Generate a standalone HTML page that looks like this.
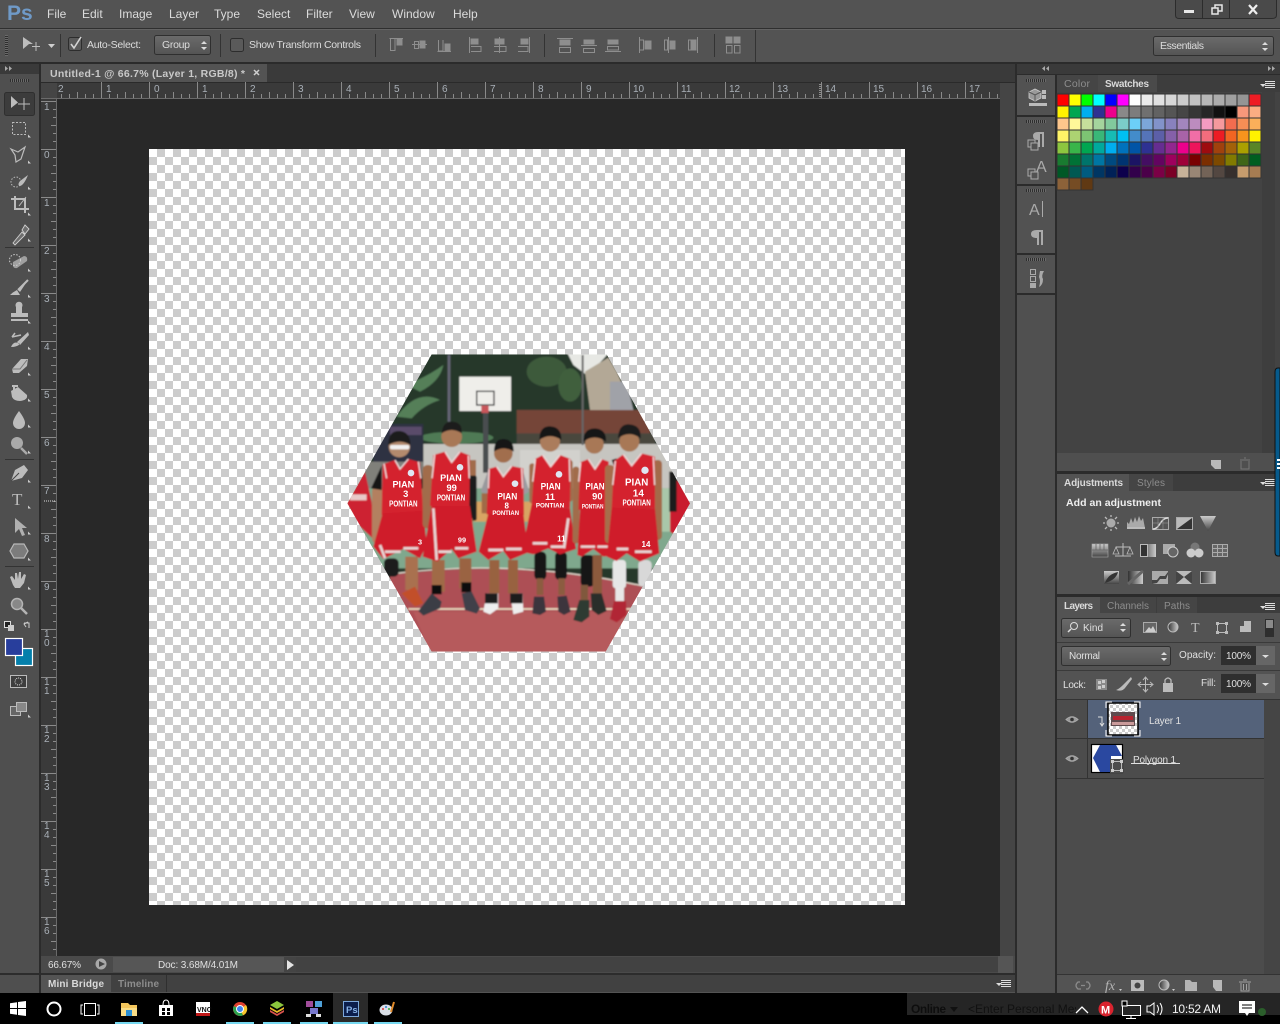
<!DOCTYPE html>
<html><head><meta charset="utf-8"><title>Photoshop</title>
<style>
html,body{margin:0;padding:0;background:#535353;overflow:hidden;width:1280px;height:1024px}
svg{display:block;position:absolute;left:0;top:0}
text{font-family:"Liberation Sans",sans-serif;font-size:11px;fill:#d6d6d6}
.m{font-size:12px;fill:#dcdcdc}
.o{font-size:10.5px;fill:#dcdcdc}
.r{font-size:10px;fill:#a9b0b8}
.t{font-size:10px;font-weight:bold;fill:#8d8d8d}
.a{font-size:10px;font-weight:bold;fill:#dadada}
.c{font-size:10px;fill:#e0e0e0}
.i{fill:#bcbcbc}
.n{font-weight:bold;fill:#fff;text-anchor:middle}
</style></head><body>
<svg width="1280" height="1024" viewBox="0 0 1280 1024">
<defs>
<pattern id="ck" width="16" height="16" patternUnits="userSpaceOnUse" x="149" y="149"><rect width="16" height="16" fill="#fff"/><rect x="8" width="8" height="8" fill="#ccc"/><rect y="8" width="8" height="8" fill="#ccc"/></pattern>
<pattern id="ck2" width="6" height="6" patternUnits="userSpaceOnUse"><rect width="6" height="6" fill="#fff"/><rect x="3" width="3" height="3" fill="#ccc"/><rect y="3" width="3" height="3" fill="#ccc"/></pattern>
<pattern id="rx" width="48" height="16" patternUnits="userSpaceOnUse" x="149" y="82"><rect width="1" height="16" fill="#8a8a8a"/><rect x="8" y="12" width="1" height="4" fill="#8a8a8a"/><rect x="16" y="12" width="1" height="4" fill="#8a8a8a"/><rect x="24" y="10" width="1" height="6" fill="#8a8a8a"/><rect x="32" y="12" width="1" height="4" fill="#8a8a8a"/><rect x="40" y="12" width="1" height="4" fill="#8a8a8a"/></pattern>
<pattern id="ry" width="16" height="48" patternUnits="userSpaceOnUse" x="41" y="149"><rect width="16" height="1" fill="#8a8a8a"/><rect x="12" y="8" height="1" width="4" fill="#8a8a8a"/><rect x="12" y="16" height="1" width="4" fill="#8a8a8a"/><rect x="10" y="24" height="1" width="6" fill="#8a8a8a"/><rect x="12" y="32" height="1" width="4" fill="#8a8a8a"/><rect x="12" y="40" height="1" width="4" fill="#8a8a8a"/></pattern>
<linearGradient id="dd" x1="0" y1="0" x2="0" y2="1"><stop offset="0" stop-color="#6b6b6b"/><stop offset="1" stop-color="#545454"/></linearGradient>
<linearGradient id="gr" x1="0" y1="0" x2="1" y2="0"><stop offset="0" stop-color="#333"/><stop offset="1" stop-color="#ccc"/></linearGradient>
<linearGradient id="grv" x1="0" y1="0" x2="0" y2="1"><stop offset="0" stop-color="#ccc"/><stop offset="1" stop-color="#444"/></linearGradient>
<filter id="bl" x="0" y="0" width="100%" height="100%"><feGaussianBlur stdDeviation="2"/></filter>
<clipPath id="hex"><polygon points="275,28 800,28 1050,475 797,920 275,920 22,475"/></clipPath>
<clipPath id="msg"><rect x="960" y="993" width="116" height="22"/></clipPath>
<pattern id="grip" width="2" height="3" patternUnits="userSpaceOnUse"><rect width="1" height="3" fill="#2e2e2e"/><rect x="1" width="1" height="3" fill="#6a6a6a"/></pattern>
<pattern id="gripv" width="3" height="2" patternUnits="userSpaceOnUse"><rect width="3" height="1" fill="#2e2e2e"/><rect y="1" width="3" height="1" fill="#6a6a6a"/></pattern>
<g id="menuic"><path d="M0 3H6L3 6Z" fill="#ddd"/><path d="M5 .5H15M5 2.500H15M5 4.500H15M5 6.500H15" stroke="#ddd" stroke-width="1" shape-rendering="crispEdges"/></g>
</defs>

<!-- base -->
<rect width="1280" height="1024" fill="#535353"/>
<rect y="28" width="1280" height="1" fill="#2f2f2f"/><rect y="29" width="1280" height="1" fill="#636363"/>
<rect y="62" width="1280" height="2" fill="#2b2b2b"/>

<!-- Menu -->
<text x="7" y="20" style="font-size:21px;font-weight:bold;fill:#6f9ac8">Ps</text>
<text class="m" x="47" y="18">File</text><text class="m" x="82" y="18">Edit</text><text class="m" x="119" y="18">Image</text><text class="m" x="169" y="18">Layer</text><text class="m" x="214" y="18">Type</text><text class="m" x="257" y="18">Select</text><text class="m" x="306" y="18">Filter</text><text class="m" x="349" y="18">View</text><text class="m" x="392" y="18">Window</text><text class="m" x="453" y="18">Help</text>

<!-- window buttons -->
<path d="M1175.500 0V15Q1175.500 18.500 1179 18.500H1272Q1276.500 18.500 1276.500 15V0" fill="#4a4a4a" stroke="#2c2c2c"/>
<rect x="1202" y="0" width="1" height="18" fill="#2c2c2c"/><rect x="1229" y="0" width="1" height="18" fill="#2c2c2c"/>
<rect x="1184" y="10" width="10" height="3" fill="#e8e8e8"/>
<rect x="1215" y="5" width="7" height="6" fill="none" stroke="#e8e8e8" stroke-width="1.500"/><rect x="1212" y="8" width="6" height="6" fill="#4a4a4a" stroke="#e8e8e8" stroke-width="1.500"/>
<path d="M1249 5L1257 14M1257 5L1249 14" stroke="#eee" stroke-width="2.200"/>

<!-- Options bar -->
<rect x="5" y="35" width="3" height="21" fill="url(#gripv)"/>
<path d="M23 37V49L29 44H33Z" fill="#bdbdbd"/>
<path d="M36 42V51M32 46.500H40" stroke="#bdbdbd" stroke-width="1"/>
<path d="M48 44H55L51.500 48Z" fill="#cfcfcf"/>
<rect x="60" y="34" width="1" height="23" fill="#333"/>
<rect x="68.500" y="37.500" width="13" height="13" rx="2" fill="#5a5a5a" stroke="#2d2d2d"/>
<path d="M71 44L74 48L81 37" fill="none" stroke="#d4d4d4" stroke-width="1.600"/>
<text class="o" x="87" y="48" textLength="54">Auto-Select:</text>
<rect x="154.500" y="35.500" width="56" height="19" rx="2" fill="url(#dd)" stroke="#2f2f2f"/>
<text class="o" x="162" y="48" textLength="28">Group</text>
<path d="M201 44L204 41L207 44ZM201 47H207L204 50Z" fill="#dcdcdc"/>
<rect x="220" y="34" width="1" height="23" fill="#333"/>
<rect x="230.500" y="38.500" width="13" height="13" rx="2" fill="#5a5a5a" stroke="#2d2d2d"/>
<text class="o" x="249" y="48" textLength="112">Show Transform Controls</text>
<rect x="375" y="34" width="1" height="23" fill="#333"/>
<g fill="none" stroke="#8e8e8e">
<path d="M389.500 38.500H403M390.500 39V50.500H395V39"/><rect x="397" y="39" width="5" height="6" fill="#8e8e8e"/>
<path d="M412 44.500H427M414.500 41.500H418.500V48.500H414.500Z"/><rect x="420" y="41" width="5" height="7" fill="#8e8e8e"/>
<path d="M437.500 51.500H451M438.500 40V51H443V40"/><rect x="445" y="44" width="5" height="7" fill="#8e8e8e"/>
<path d="M469.500 37V53M471 46.500H481V51.500H471"/><rect x="471" y="39" width="7" height="5" fill="#8e8e8e"/>
<path d="M499.500 37V53M494 46.500H506V51.500H494"/><rect x="495" y="39" width="9" height="5" fill="#8e8e8e"/>
<path d="M529.500 37V53M518 46.500H528V51.500H518"/><rect x="521" y="39" width="7" height="5" fill="#8e8e8e"/>
<path d="M557 38.500H573M559.500 47.500H570.500V52.500H559.500Z"/><rect x="560" y="40" width="10" height="5" fill="#8e8e8e"/>
<path d="M581 45.500H597M583.500 48.500H594.500V52.500H583.500Z"/><rect x="584" y="40" width="10" height="4" fill="#8e8e8e"/>
<path d="M605 51.500H621M607.500 46.500H618.500V50H607.500Z"/><rect x="608" y="40" width="10" height="4" fill="#8e8e8e"/>
<path d="M639.500 37V53M640 40H643.500V50H640"/><rect x="645" y="41" width="6" height="8" fill="#8e8e8e"/>
<path d="M668.500 37V53M664.500 40H667.500V50H664.500Z"/><rect x="670" y="41" width="5" height="8" fill="#8e8e8e"/>
<path d="M697.500 37V53M688.500 40H696V50H688.500Z"/><rect x="691" y="41" width="5" height="8" fill="#8e8e8e"/>
<path d="M726.500 45.500H732V53H726.500ZM734.500 45.500H740V53H734.500Z"/><rect x="726" y="37" width="6" height="6" fill="#8e8e8e"/><rect x="734" y="37" width="6" height="6" fill="#8e8e8e"/>
</g>
<rect x="544" y="34" width="1" height="23" fill="#333"/><rect x="714" y="34" width="1" height="23" fill="#333"/><rect x="755" y="30" width="1" height="32" fill="#333"/>
<rect x="1153.500" y="36.500" width="120" height="19" rx="2" fill="url(#dd)" stroke="#2f2f2f"/>
<text class="o" x="1160" y="49" textLength="44">Essentials</text>
<path d="M1262 45L1265 42L1268 45ZM1262 48H1268L1265 51Z" fill="#dcdcdc"/>

<!-- Left tools -->
<rect x="0" y="64" width="39" height="929" fill="#4f4f4f"/>
<rect x="0" y="64" width="39" height="10" fill="#3a3a3a"/>
<path d="M5 66V71L8 68.500ZM9 66V71L12 68.500Z" fill="#aaa"/>
<rect x="10" y="79" width="19" height="3" fill="url(#grip)"/>
<rect x="39" y="64" width="2" height="929" fill="#2b2b2b"/>

<!-- tool bar icons -->
<rect x="4.500" y="92.500" width="30" height="23" rx="2" fill="#3c3c3c" stroke="#2f2f2f"/>
<path d="M11 96V108L18 102.500Z" class="i"/><path d="M24 98V110M18 104H30" stroke="#bcbcbc"/>
<rect x="12.500" y="122.500" width="13" height="12" fill="none" stroke="#bcbcbc" stroke-dasharray="2 1.500"/>
<path d="M11 149L18 152 25 147 21 159 16 162 15 155Z" fill="none" stroke="#bcbcbc" stroke-width="1.200"/>
<circle cx="16" cy="182" r="5" fill="none" stroke="#bcbcbc" stroke-dasharray="1.500 1.500"/><path d="M28 175L20 181Q17 185 20 186 24 185 28 175Z" class="i"/>
<path d="M11 199H25V213M15 196V209H29" fill="none" stroke="#bcbcbc" stroke-width="2"/><path d="M26 197L19 206" stroke="#bcbcbc"/>
<path d="M13 243L22 232 25 235 15 245ZM22 230L25 225 29 229 25 234Z" fill="#6e6e6e" stroke="#d0d0d0" stroke-width=".9"/>
<rect x="5" y="247" width="29" height="1" fill="#333"/>
<path d="M13 262L24 256Q28 256 27 261L17 268Q12 269 13 262Z" fill="#a0a0a0"/><circle cx="15" cy="260" r="5.500" fill="none" stroke="#ccc" stroke-dasharray="1.500 1.500"/>
<path d="M28 280L18 290 20 292ZM17 290Q13 292 10 295H20Z" class="i"/><path d="M28 280L18 290" stroke="#bcbcbc" stroke-width="2"/>
<path d="M16 307a3.500 3.500 0 1 1 6 0V313H28V317H11V313H16Z" class="i"/><rect x="11" y="319" width="17" height="2" fill="#bcbcbc"/>
<path d="M28 332L17 342 20 345 29 335ZM11 347Q14 340 20 344 17 347 11 347Z" class="i"/><path d="M12 337L21 335M12 337L15 333" stroke="#bcbcbc" stroke-width="1.500" fill="none"/>
<path d="M12 369L21 359H28L27 366 19 373H13Z" class="i"/><path d="M12 369H20L27 360" stroke="#777" fill="none"/>
<path d="M11 391L18 387 27 395Q28 400 20 401 14 401 12 397Z" class="i"/><path d="M14 387V393M18 386H12" stroke="#bcbcbc" stroke-width="2"/>
<path d="M19 411Q25 419 25 423A6 6 0 0 1 13 423Q13 419 19 411Z" class="i"/>
<circle cx="17" cy="443" r="6" fill="#aaa"/><path d="M21 448L27 454" stroke="#aaa" stroke-width="2.500"/>
<rect x="5" y="459" width="29" height="1" fill="#333"/>
<path d="M11 481L15 470 24 465 28 470 22 478Z" class="i"/><path d="M11 481L19 473" stroke="#444"/>
<text x="12" y="505" style="font-family:'Liberation Serif',serif;font-size:17px;fill:#bcbcbc">T</text>
<path d="M15 518V533L19 529 22 536 25 535 22 528H27Z" fill="#b0b0b0"/>
<path d="M14 544H24L28 551 24 558H14L10 551Z" fill="#7c7c7c" stroke="#b8b8b8" stroke-width="1.200"/>
<rect x="5" y="566" width="29" height="1" fill="#333"/>
<path d="M13 585L10 577 12 576 15 580 15 573 17 573 18 579 19 572 21 572 21 579 24 574 26 575 24 583 20 588H15Z" class="i"/>
<circle cx="17" cy="604" r="5.500" fill="#888" stroke="#b4b4b4" stroke-width="1.500"/><path d="M21 608L27 614" stroke="#b4b4b4" stroke-width="2.500"/>
<rect x="4.500" y="621.500" width="6" height="6" fill="#222" stroke="#ddd"/><rect x="8" y="625" width="6" height="6" fill="#ccc"/>
<path d="M24 623H29V628M28 622L24 624 26 627" fill="none" stroke="#ccc"/>
<rect x="15.500" y="648.500" width="17" height="17" fill="#047fab" stroke="#fff" stroke-width="1.200"/>
<rect x="5.500" y="638.500" width="17" height="17" fill="#283e9c" stroke="#fff" stroke-width="1.200"/>
<rect x="10.500" y="675.500" width="16" height="12" fill="#3e3e3e" stroke="#bbb"/><circle cx="18.500" cy="681.500" r="3.500" fill="none" stroke="#ddd" stroke-dasharray="1 1"/>
<rect x="10.500" y="706.500" width="10" height="9" fill="#666" stroke="#bbb"/><rect x="16.500" y="702.500" width="10" height="9" fill="#888" stroke="#bbb"/>
<g fill="#ccc"><path d="M27 136V133L30 136ZM27 162V159L30 162ZM27 188V185L30 188ZM27 214V211L30 214ZM27 240V237L30 240ZM27 270V267L30 270ZM27 296V293L30 296ZM27 322V319L30 322ZM27 348V345L30 348ZM27 374V371L30 374ZM27 400V397L30 400ZM27 426V423L30 426ZM27 452V449L30 452ZM27 481V478L30 481ZM27 507V504L30 507ZM27 533V530L30 533ZM27 559V556L30 559ZM27 588V585L30 588ZM27 716V713L30 716Z" transform="translate(1,1.500)"/></g>

<!-- Document strip -->
<rect x="41" y="64" width="974" height="18" fill="#3a3a3a"/>
<rect x="41" y="64" width="226" height="18" fill="#535353"/>
<text x="50" y="77" textLength="195" style="font-size:10.500px;font-weight:bold;fill:#c9c9c9">Untitled-1 @ 66.7% (Layer 1, RGB/8) *</text>
<path d="M254 70L259 75M259 70L254 75" stroke="#cfcfcf" stroke-width="1.500"/>
<rect x="41" y="82" width="974" height="1" fill="#2a2a2a"/>

<!-- Rulers -->
<rect x="41" y="83" width="974" height="15" fill="#3a3a3a"/>
<rect x="41" y="98" width="16" height="858" fill="#3a3a3a"/>
<rect x="57" y="82" width="943" height="16" fill="url(#rx)"/>
<rect x="41" y="98" width="16" height="858" fill="url(#ry)"/>
<rect x="41" y="83" width="16" height="15" fill="#454545"/>
<rect x="57" y="98" width="943" height="858" fill="#282828"/>
<rect x="41" y="98" width="959" height="1" fill="#6a6a6a"/><rect x="56" y="98" width="1" height="858" fill="#6a6a6a"/>
<rect x="1000" y="83" width="15" height="873" fill="#454545"/>
<g>
<text class="r" x="58" y="92">2</text><text class="r" x="106" y="92">1</text><text class="r" x="154" y="92">0</text><text class="r" x="202" y="92">1</text><text class="r" x="250" y="92">2</text><text class="r" x="298" y="92">3</text><text class="r" x="346" y="92">4</text><text class="r" x="394" y="92">5</text><text class="r" x="442" y="92">6</text><text class="r" x="490" y="92">7</text><text class="r" x="538" y="92">8</text><text class="r" x="586" y="92">9</text><text class="r" x="633" y="92">10</text><text class="r" x="681" y="92">11</text><text class="r" x="729" y="92">12</text><text class="r" x="777" y="92">13</text><text class="r" x="825" y="92">14</text><text class="r" x="873" y="92">15</text><text class="r" x="921" y="92">16</text><text class="r" x="969" y="92">17</text>
<text class="r" x="44" y="110">1</text><text class="r" x="44" y="158">0</text><text class="r" x="44" y="206">1</text><text class="r" x="44" y="254">2</text><text class="r" x="44" y="302">3</text><text class="r" x="44" y="350">4</text><text class="r" x="44" y="398">5</text><text class="r" x="44" y="446">6</text><text class="r" x="44" y="494">7</text><text class="r" x="44" y="542">8</text><text class="r" x="44" y="590">9</text>
<text class="r" x="44" y="637">1</text><text class="r" x="44" y="646">0</text><text class="r" x="44" y="685">1</text><text class="r" x="44" y="694">1</text><text class="r" x="44" y="733">1</text><text class="r" x="44" y="742">2</text><text class="r" x="44" y="781">1</text><text class="r" x="44" y="790">3</text><text class="r" x="44" y="829">1</text><text class="r" x="44" y="838">4</text><text class="r" x="44" y="877">1</text><text class="r" x="44" y="886">5</text><text class="r" x="44" y="925">1</text><text class="r" x="44" y="934">6</text>
</g>
<path d="M820 84V98" stroke="#ddd" stroke-dasharray="1 1"/><path d="M44 501H56" stroke="#ddd" stroke-dasharray="1 1"/>

<!-- Canvas -->
<rect x="149" y="149" width="756" height="756" fill="url(#ck)"/>

<!-- Photo -->
<svg x="340" y="345" width="360" height="315" viewBox="0 0 1080 945">
<g clip-path="url(#hex)"><g filter="url(#bl)">
<rect width="1080" height="945" fill="#26392c"/>
<path d="M170 215Q230 130 300 165 250 180 215 220ZM200 120Q270 90 310 60 300 110 240 140Z" fill="#547f58"/><ellipse cx="350" cy="278" rx="110" ry="18" fill="#4f7a54"/><ellipse cx="620" cy="80" rx="60" ry="45" fill="#3d5a3b"/><ellipse cx="690" cy="120" rx="35" ry="50" fill="#3f5f3c"/>
<polygon points="680,20 810,20 760,75 740,90 700,60" fill="#e7e8e4"/>
<polygon points="735,80 805,38 830,80 880,195 750,195" fill="#b3a896"/>
<polygon points="810,110 860,110 880,195 810,195" fill="#a0a2a8"/>
<rect x="530" y="195" width="400" height="72" fill="#744539"/><rect x="530" y="265" width="415" height="32" fill="#4a473e"/>
<rect x="250" y="297" width="750" height="135" fill="#c6c5c0"/><rect x="540" y="315" width="180" height="115" fill="#d2d1cd"/>
<rect x="100" y="237" width="150" height="115" fill="#2f3142"/><rect x="150" y="245" width="95" height="25" fill="#5a4c6a"/>
<rect x="0" y="350" width="250" height="90" fill="#80807a"/>
<rect x="0" y="430" width="1080" height="240" fill="#7fa88d"/><rect x="400" y="470" width="180" height="60" fill="#d8a464"/>
<rect x="960" y="430" width="50" height="130" fill="#a9c7a9"/>
<path d="M150 690Q520 640 910 725L900 945H150Z" fill="#ad5054"/>
<path d="M170 685Q520 640 905 722" fill="none" stroke="#e2d9cc" stroke-width="4"/>
<path d="M205 792H880" stroke="#e9dcc2" stroke-width="5"/>
<path d="M220 800H870L800 945H280Z" fill="#b65a5c"/>
<rect x="429" y="198" width="16" height="185" fill="#4a4d50"/><rect x="323" y="30" width="8" height="200" fill="#667"/><rect x="725" y="30" width="6" height="270" fill="#666"/>
<rect x="358" y="95" width="155" height="103" fill="#efeeea"/><rect x="410" y="139" width="52" height="41" fill="none" stroke="#333" stroke-width="4"/><rect x="424" y="182" width="22" height="22" fill="#c9545a"/>
<!-- edges -->
<path d="M20 475L75 380 95 470 103 585 55 540Z" fill="#cd2230"/><path d="M990 390L1015 410 1055 475 1005 570 990 560Z" fill="#c91f2d"/><rect x="988" y="380" width="22" height="120" fill="#1c1c1c"/>
<rect x="30" y="448" width="50" height="18" fill="#e8c9c9"/>
<!-- P1 -->
<rect x="132" y="640" width="44" height="55" rx="14" fill="#1b1b1b"/><rect x="196" y="635" width="38" height="100" fill="#a9714f"/>
<path d="M185 745L225 725 250 775 225 785Z" fill="#c2502a"/>
<rect x="96" y="425" width="34" height="170" rx="14" fill="#b38060"/><path d="M93 430L125 362V435Z" fill="#191919"/><rect x="235" y="420" width="20" height="140" fill="#a9714f"/><path d="M240 355L252 425 238 440Z" fill="#1c1c1c"/>
<circle cx="178" cy="305" r="32" fill="#b38a6d"/><path d="M145 300Q145 255 180 258 212 262 211 300 180 280 145 300Z" fill="#1c1c1c"/><rect x="150" y="300" width="58" height="13" rx="5" fill="#f0f0f0"/>
<path d="M128 358L165 345 180 372 205 342 240 352 250 505 125 510Z" fill="#d4222f"/><path d="M132 356L140 400M165 345L180 372 205 342M235 350L243 400" fill="none" stroke="#f0dcdc" stroke-width="4"/>
<path d="M100 605L128 505 250 497 260 600 240 640 190 612 130 642Z" fill="#cf1f2c"/><path d="M120 600L135 640M135 620H182M190 610H235" stroke="#e7d4d4" stroke-width="8" fill="none"/>
<!-- P2 -->
<rect x="276" y="645" width="38" height="95" fill="#a06a47"/><rect x="358" y="640" width="36" height="90" fill="#9a6443"/><rect x="275" y="720" width="30" height="28" fill="#111"/><rect x="364" y="712" width="30" height="30" fill="#111"/>
<path d="M235 798L275 745 305 770 300 790 250 812Z" fill="#3a3c44"/><path d="M365 745L395 740 420 790 410 806 375 795Z" fill="#3f4048"/>
<rect x="248" y="360" width="32" height="190" rx="14" fill="#a16c4b"/><rect x="388" y="345" width="20" height="55" fill="#a16c4b"/><rect x="386" y="392" width="24" height="135" rx="6" fill="#1a1a1a"/><rect x="358" y="520" width="40" height="60" fill="#a16c4b"/>
<circle cx="335" cy="275" r="31" fill="#a87857"/><path d="M305 265Q308 228 338 230 368 232 365 265 335 245 305 265Z" fill="#1c1c1c"/>
<path d="M280 330L315 320 335 352 360 320 390 332 388 487 270 483Z" fill="#d4222f"/><path d="M284 328L276 400M315 320L335 352 360 320M385 332L388 400" fill="none" stroke="#f0dcdc" stroke-width="4"/>
<path d="M248 635L275 483 390 483 410 620 355 640 335 612 292 650Z" fill="#cf1f2c"/><path d="M280 490L290 645M295 620H335M345 610H385" stroke="#e8d5d5" stroke-width="8" fill="none"/>
<!-- P3 -->
<rect x="448" y="645" width="30" height="100" fill="#98623f"/><rect x="504" y="645" width="30" height="100" fill="#98623f"/>
<path d="M430 800L440 745 475 745 475 790 450 808Z" fill="#eee"/><path d="M510 745L548 745 550 800 520 808Z" fill="#eee"/><rect x="435" y="745" width="38" height="30" fill="#1a1a1a"/><rect x="510" y="745" width="38" height="30" fill="#1a1a1a"/>
<path d="M422 440L445 375V450Z" fill="#99999c"/><path d="M548 375L568 440 550 450Z" fill="#9b9ba0"/><rect x="425" y="445" width="22" height="60" fill="#a06a47"/>
<circle cx="490" cy="325" r="28" fill="#a16e4e"/><path d="M462 320Q462 280 492 282 522 284 521 320 490 300 462 320Z" fill="#171717"/>
<path d="M445 372L470 365 490 395 515 363 550 370 552 510 440 508Z" fill="#d4222f"/><path d="M447 372L445 430M470 365L490 395 515 363M545 370L548 430" fill="none" stroke="#f0dcdc" stroke-width="4"/>
<path d="M416 620L445 505 550 505 565 622 510 645 490 618 445 645Z" fill="#cf1f2c"/><path d="M445 615H490M498 612H545" stroke="#e8d5d5" stroke-width="8" fill="none"/>
<!-- P4 -->
<rect x="583" y="620" width="36" height="85" rx="14" fill="#191919"/><rect x="645" y="620" width="36" height="85" rx="14" fill="#191919"/><rect x="590" y="700" width="20" height="50" fill="#8c5c3f"/><rect x="655" y="700" width="20" height="50" fill="#8c5c3f"/>
<path d="M577 805L582 755 612 755 618 800 600 810Z" fill="#3a343c"/><path d="M652 755L680 752 692 800 672 810 655 800Z" fill="#3c363e"/>
<rect x="568" y="355" width="18" height="120" rx="8" fill="#a16c4b"/><rect x="680" y="345" width="18" height="125" rx="8" fill="#a16c4b"/>
<circle cx="630" cy="290" r="30" fill="#ab7c5c"/><path d="M598 285Q598 242 632 244 665 246 664 285 630 262 598 285Z" fill="#191919"/>
<path d="M585 342L608 330 632 365 660 330 692 342 690 490 575 478Z" fill="#d4222f"/><path d="M586 342L578 410M608 330L632 365 660 330M688 342L690 410" fill="none" stroke="#f0dcdc" stroke-width="4"/>
<path d="M545 620L575 478 690 490 708 612 660 628 625 610 580 628Z" fill="#cf1f2c"/><path d="M578 595H622M632 605H672M685 520L672 610" stroke="#e8d5d5" stroke-width="8" fill="none"/>
<!-- P5 -->
<rect x="722" y="630" width="42" height="95" rx="14" fill="#181818"/><rect x="758" y="630" width="28" height="120" fill="#8c5a3c"/><rect x="722" y="720" width="22" height="45" fill="#80583c"/>
<path d="M700 825L718 765 748 765 748 815 725 832Z" fill="#2d3a32"/><path d="M752 745L785 745 800 798 775 810 755 795Z" fill="#2a2f2c"/>
<rect x="698" y="365" width="20" height="230" rx="9" fill="#a16c4b"/>
<circle cx="763" cy="298" r="28" fill="#a87857"/><path d="M730 290Q730 250 765 250 800 252 798 290 764 265 730 290Z" fill="#141414"/>
<path d="M720 352L745 342 765 372 785 342 806 350 805 497 715 495Z" fill="#d4222f"/><path d="M745 342L765 372 785 342M722 352L716 410" fill="none" stroke="#f0dcdc" stroke-width="4"/>
<path d="M712 630L720 492 805 492 825 630 790 635 760 612 725 635Z" fill="#cf1f2c"/><path d="M722 605H765M772 605H805" stroke="#e8d5d5" stroke-width="7" fill="none"/>
<!-- P6 -->
<rect x="818" y="645" width="40" height="85" rx="10" fill="#e6e6e6"/><rect x="895" y="645" width="40" height="80" rx="14" fill="#d8d8d8"/><rect x="826" y="728" width="26" height="45" fill="#e8e8e8"/>
<path d="M810 822L822 768 858 768 860 810 830 832Z" fill="#b12834"/>
<rect x="795" y="360" width="28" height="235" rx="12" fill="#a66e4c"/><rect x="940" y="345" width="26" height="240" rx="12" fill="#a36b49"/><path d="M815 345L830 340 825 370Z" fill="#141414"/>
<circle cx="868" cy="290" r="30" fill="#a87857"/><path d="M834 280Q836 236 868 238 904 240 902 280 868 255 834 280Z" fill="#1a1a1a"/>
<path d="M822 348L850 328 875 362 905 325 945 335 945 490 815 490Z" fill="#d4222f"/><path d="M826 348L818 420M850 328L875 362 905 325M940 335L944 420" fill="none" stroke="#f0dcdc" stroke-width="4"/>
<path d="M800 635L815 488 945 490 958 625 900 650 860 625 830 648Z" fill="#cf1f2c"/><path d="M830 612H865M885 620H935" stroke="#e8d5d5" stroke-width="8" fill="none"/>
</g>
<g>
<circle cx="213" cy="384" r="10" fill="#dfe6f2"/><circle cx="360" cy="367" r="10" fill="#dfe6f2"/><circle cx="525" cy="416" r="10" fill="#dfe6f2"/><circle cx="657" cy="388" r="10" fill="#dfe6f2"/><circle cx="915" cy="376" r="11" fill="#dfe6f2"/>
<text class="n" x="190" y="428" textLength="65" lengthAdjust="spacingAndGlyphs" style="font-size:28px">PIAN</text><text class="n" x="197" y="456" style="font-size:28px">3</text><text class="n" x="190" y="484" textLength="85" lengthAdjust="spacingAndGlyphs" style="font-size:24px">PONTIAN</text>
<text class="n" x="333" y="408" textLength="65" lengthAdjust="spacingAndGlyphs" style="font-size:28px">PIAN</text><text class="n" x="335" y="438" style="font-size:28px">99</text><text class="n" x="333" y="466" textLength="85" lengthAdjust="spacingAndGlyphs" style="font-size:24px">PONTIAN</text>
<text class="n" x="502" y="463" textLength="60" lengthAdjust="spacingAndGlyphs" style="font-size:28px">PIAN</text><text class="n" x="500" y="490" style="font-size:24px">8</text><text class="n" x="497" y="510" textLength="80" lengthAdjust="spacingAndGlyphs" style="font-size:18px">PONTIAN</text>
<text class="n" x="632" y="434" textLength="60" lengthAdjust="spacingAndGlyphs" style="font-size:28px">PIAN</text><text class="n" x="630" y="465" style="font-size:28px">11</text><text class="n" x="630" y="488" textLength="85" lengthAdjust="spacingAndGlyphs" style="font-size:20px">PONTIAN</text>
<text class="n" x="765" y="434" textLength="58" lengthAdjust="spacingAndGlyphs" style="font-size:28px">PIAN</text><text class="n" x="772" y="464" style="font-size:28px">90</text><text class="n" x="758" y="490" textLength="65" lengthAdjust="spacingAndGlyphs" style="font-size:20px">PONTIAN</text>
<text class="n" x="890" y="421" textLength="70" lengthAdjust="spacingAndGlyphs" style="font-size:30px">PIAN</text><text class="n" x="895" y="454" style="font-size:30px">14</text><text class="n" x="890" y="482" textLength="85" lengthAdjust="spacingAndGlyphs" style="font-size:24px">PONTIAN</text>
<text class="n" x="366" y="592" style="font-size:22px">99</text><text class="n" x="664" y="590" style="font-size:24px">11</text><text class="n" x="918" y="606" style="font-size:24px">14</text><text class="n" x="240" y="598" style="font-size:22px">3</text>
</g></g>
</svg>

<!-- Status bar -->
<rect x="41" y="956" width="974" height="17" fill="#4a4a4a"/>
<rect x="113" y="957" width="171" height="15" fill="#565656"/><rect x="284" y="957" width="12" height="15" fill="#444"/>
<rect x="296" y="957" width="702" height="15" fill="#424242"/><rect x="998" y="956" width="15" height="17" fill="#555"/>
<text x="48" y="968" class="c" textLength="33">66.67%</text>
<circle cx="101" cy="964" r="5.500" fill="#a8a8a8"/><path d="M99 961L105 964 99 967Z" fill="#444"/>
<text x="158" y="968" class="c" textLength="80">Doc: 3.68M/4.01M</text>
<path d="M287 960L294 965 287 970Z" fill="#e4e4e4"/>
<rect x="0" y="973" width="1015" height="2" fill="#2c2c2c"/>
<rect x="41" y="975" width="974" height="17" fill="#414141"/>
<rect x="41" y="975" width="70" height="17" fill="#545454"/>
<text x="48" y="987" class="a" textLength="56">Mini Bridge</text>
<text x="118" y="987" class="t" textLength="41">Timeline</text>
<rect x="166" y="975" width="1" height="17" fill="#2f2f2f"/>
<use href="#menuic" x="996" y="980"/>

<!-- Right dock strip -->
<rect x="1015" y="64" width="265" height="929" fill="#2b2b2b"/>
<rect x="1017" y="64" width="263" height="10" fill="#3a3a3a"/>
<path d="M1049 66V71L1046 68.500ZM1045 66V71L1042 68.500Z" fill="#aaa"/><path d="M1268 66V71L1271 68.500ZM1272 66V71L1275 68.500Z" fill="#aaa"/>
<rect x="1017" y="75" width="38" height="40" fill="#525252"/><rect x="1017" y="117" width="38" height="67" fill="#525252"/><rect x="1017" y="186" width="38" height="67" fill="#525252"/><rect x="1017" y="255" width="38" height="38" fill="#525252"/><rect x="1017" y="295" width="38" height="698" fill="#505050"/>
<rect x="1026" y="79" width="20" height="3" fill="url(#grip)"/><rect x="1026" y="120" width="20" height="3" fill="url(#grip)"/><rect x="1026" y="189" width="20" height="3" fill="url(#grip)"/><rect x="1026" y="258" width="20" height="3" fill="url(#grip)"/>
<path d="M1029 92L1035 89 1041 92V98L1035 101 1029 98Z" fill="#9a9a9a" stroke="#ccc" stroke-width=".8"/><path d="M1029 92L1035 95 1041 92M1035 95V101" stroke="#555" fill="none"/><rect x="1042" y="90" width="4" height="4" fill="#bbb"/><rect x="1042" y="95" width="4" height="4" fill="#bbb"/><rect x="1029" y="103" width="18" height="3" fill="#bbb"/>
<path d="M1035 132H1044V147H1042V134H1040V147H1038V140Q1033 140 1033 136 1033 132 1038 132Z" fill="#aaa"/><rect x="1028" y="140" width="7" height="7" fill="none" stroke="#aaa"/><rect x="1031" y="143" width="7" height="7" fill="#525252" stroke="#aaa"/>
<text x="1036" y="172" style="font-size:16px;fill:#aaa">A</text><rect x="1028" y="169" width="7" height="7" fill="none" stroke="#aaa"/><rect x="1031" y="172" width="7" height="7" fill="#525252" stroke="#aaa"/>
<text x="1029" y="215" style="font-size:16px;fill:#aaa">A</text><rect x="1042" y="201" width="1" height="16" fill="#aaa"/>
<path d="M1034 230H1043V245H1041V232H1039V245H1037V238Q1031 238 1031 234 1031 230 1037 230Z" fill="#aaa"/>
<rect x="1030.500" y="269.500" width="5" height="5" fill="none" stroke="#aaa"/><rect x="1030.500" y="276.500" width="5" height="5" fill="none" stroke="#aaa"/><rect x="1030" y="283" width="6" height="5" fill="#aaa"/><path d="M1040 271H1044Q1041 276 1043 279 1043 285 1039 287 1041 281 1039 277Z" fill="#aaa"/>

<!-- Swatches panel -->
<rect x="1057" y="75" width="223" height="17" fill="#3d3d3d"/>
<rect x="1057" y="75" width="41" height="17" fill="#454545"/><rect x="1098" y="75" width="59" height="18" fill="#4a4a4a"/>
<text x="1064" y="87" class="t" textLength="26" style="font-weight:normal;font-size:10.500px">Color</text>
<text x="1105" y="87" class="a" textLength="44">Swatches</text>
<use href="#menuic" x="1260" y="81"/>
<rect x="1057" y="92" width="223" height="361" fill="#434343"/>
<rect x="1262" y="92" width="13" height="361" fill="#3e3e3e"/>
<g shape-rendering="crispEdges" stroke="#333" stroke-width="1">
<g transform="translate(1057,94)"><rect x="0" width="12" height="12" fill="#ff0000"/><rect x="12" width="12" height="12" fill="#ffff00"/><rect x="24" width="12" height="12" fill="#00ff00"/><rect x="36" width="12" height="12" fill="#00ffff"/><rect x="48" width="12" height="12" fill="#0000ff"/><rect x="60" width="12" height="12" fill="#ff00ff"/><rect x="72" width="12" height="12" fill="#ffffff"/><rect x="84" width="12" height="12" fill="#ebebeb"/><rect x="96" width="12" height="12" fill="#e1e1e1"/><rect x="108" width="12" height="12" fill="#d7d7d7"/><rect x="120" width="12" height="12" fill="#cccccc"/><rect x="132" width="12" height="12" fill="#c2c2c2"/><rect x="144" width="12" height="12" fill="#b7b7b7"/><rect x="156" width="12" height="12" fill="#acacac"/><rect x="168" width="12" height="12" fill="#a0a0a0"/><rect x="180" width="12" height="12" fill="#959595"/><rect x="192" width="12" height="12" fill="#ed1c24"/></g>
<g transform="translate(1057,106)"><rect x="0" width="12" height="12" fill="#fff200"/><rect x="12" width="12" height="12" fill="#00a651"/><rect x="24" width="12" height="12" fill="#00aeef"/><rect x="36" width="12" height="12" fill="#2e3192"/><rect x="48" width="12" height="12" fill="#ec008c"/><rect x="60" width="12" height="12" fill="#898989"/><rect x="72" width="12" height="12" fill="#7d7d7d"/><rect x="84" width="12" height="12" fill="#707070"/><rect x="96" width="12" height="12" fill="#626262"/><rect x="108" width="12" height="12" fill="#555555"/><rect x="120" width="12" height="12" fill="#464646"/><rect x="132" width="12" height="12" fill="#363636"/><rect x="144" width="12" height="12" fill="#262626"/><rect x="156" width="12" height="12" fill="#111111"/><rect x="168" width="12" height="12" fill="#000000"/><rect x="180" width="12" height="12" fill="#f7977a"/><rect x="192" width="12" height="12" fill="#fbad82"/></g>
<g transform="translate(1057,118)"><rect x="0" width="12" height="12" fill="#fdc68c"/><rect x="12" width="12" height="12" fill="#fff799"/><rect x="24" width="12" height="12" fill="#c6df9c"/><rect x="36" width="12" height="12" fill="#a4d49d"/><rect x="48" width="12" height="12" fill="#81ca9d"/><rect x="60" width="12" height="12" fill="#7bcdc9"/><rect x="72" width="12" height="12" fill="#6ccff7"/><rect x="84" width="12" height="12" fill="#7ca6d8"/><rect x="96" width="12" height="12" fill="#8293ca"/><rect x="108" width="12" height="12" fill="#8881be"/><rect x="120" width="12" height="12" fill="#a286bd"/><rect x="132" width="12" height="12" fill="#bc8cbf"/><rect x="144" width="12" height="12" fill="#f49bc1"/><rect x="156" width="12" height="12" fill="#f5999d"/><rect x="168" width="12" height="12" fill="#f26c4f"/><rect x="180" width="12" height="12" fill="#f68e55"/><rect x="192" width="12" height="12" fill="#fbaf5a"/></g>
<g transform="translate(1057,130)"><rect x="0" width="12" height="12" fill="#fff467"/><rect x="12" width="12" height="12" fill="#acd372"/><rect x="24" width="12" height="12" fill="#7dc473"/><rect x="36" width="12" height="12" fill="#39b778"/><rect x="48" width="12" height="12" fill="#17bcb4"/><rect x="60" width="12" height="12" fill="#00bff3"/><rect x="72" width="12" height="12" fill="#438cca"/><rect x="84" width="12" height="12" fill="#5574b9"/><rect x="96" width="12" height="12" fill="#5c5fa8"/><rect x="108" width="12" height="12" fill="#8560a9"/><rect x="120" width="12" height="12" fill="#a863a8"/><rect x="132" width="12" height="12" fill="#f06ea6"/><rect x="144" width="12" height="12" fill="#f26d7d"/><rect x="156" width="12" height="12" fill="#ed1c24"/><rect x="168" width="12" height="12" fill="#f26522"/><rect x="180" width="12" height="12" fill="#f7941d"/><rect x="192" width="12" height="12" fill="#fff200"/></g>
<g transform="translate(1057,142)"><rect x="0" width="12" height="12" fill="#8dc63f"/><rect x="12" width="12" height="12" fill="#39b54a"/><rect x="24" width="12" height="12" fill="#00a651"/><rect x="36" width="12" height="12" fill="#00a99d"/><rect x="48" width="12" height="12" fill="#00aeef"/><rect x="60" width="12" height="12" fill="#0072bc"/><rect x="72" width="12" height="12" fill="#0054a6"/><rect x="84" width="12" height="12" fill="#2e3192"/><rect x="96" width="12" height="12" fill="#662d91"/><rect x="108" width="12" height="12" fill="#92278f"/><rect x="120" width="12" height="12" fill="#ec008c"/><rect x="132" width="12" height="12" fill="#ed145b"/><rect x="144" width="12" height="12" fill="#9e0b0f"/><rect x="156" width="12" height="12" fill="#a0410d"/><rect x="168" width="12" height="12" fill="#a36209"/><rect x="180" width="12" height="12" fill="#aba000"/><rect x="192" width="12" height="12" fill="#598527"/></g>
<g transform="translate(1057,154)"><rect x="0" width="12" height="12" fill="#197b30"/><rect x="12" width="12" height="12" fill="#007236"/><rect x="24" width="12" height="12" fill="#00746b"/><rect x="36" width="12" height="12" fill="#0076a3"/><rect x="48" width="12" height="12" fill="#004a80"/><rect x="60" width="12" height="12" fill="#003471"/><rect x="72" width="12" height="12" fill="#1b1464"/><rect x="84" width="12" height="12" fill="#440e62"/><rect x="96" width="12" height="12" fill="#630460"/><rect x="108" width="12" height="12" fill="#9e005d"/><rect x="120" width="12" height="12" fill="#9e0039"/><rect x="132" width="12" height="12" fill="#790000"/><rect x="144" width="12" height="12" fill="#7b2e00"/><rect x="156" width="12" height="12" fill="#7d4900"/><rect x="168" width="12" height="12" fill="#827b00"/><rect x="180" width="12" height="12" fill="#406618"/><rect x="192" width="12" height="12" fill="#005e20"/></g>
<g transform="translate(1057,166)"><rect x="0" width="12" height="12" fill="#005826"/><rect x="12" width="12" height="12" fill="#005952"/><rect x="24" width="12" height="12" fill="#005b7f"/><rect x="36" width="12" height="12" fill="#003663"/><rect x="48" width="12" height="12" fill="#002157"/><rect x="60" width="12" height="12" fill="#0d004c"/><rect x="72" width="12" height="12" fill="#32004b"/><rect x="84" width="12" height="12" fill="#4b0049"/><rect x="96" width="12" height="12" fill="#7b0046"/><rect x="108" width="12" height="12" fill="#7a0026"/><rect x="120" width="12" height="12" fill="#c7b299"/><rect x="132" width="12" height="12" fill="#998675"/><rect x="144" width="12" height="12" fill="#736357"/><rect x="156" width="12" height="12" fill="#534741"/><rect x="168" width="12" height="12" fill="#362f2d"/><rect x="180" width="12" height="12" fill="#c69c6d"/><rect x="192" width="12" height="12" fill="#a67c52"/></g>
<g transform="translate(1057,178)"><rect x="0" width="12" height="12" fill="#8c6239"/><rect x="12" width="12" height="12" fill="#754c24"/><rect x="24" width="12" height="12" fill="#603913"/></g>
</g>
<rect x="1057" y="453" width="223" height="18" fill="#4f4f4f"/>
<path d="M1211 460H1221V469H1215L1211 465Z" fill="#b9b9b9"/>
<path d="M1240 460H1250M1244 458H1246M1241 461V469H1249V461" fill="none" stroke="#777"/>

<!-- Adjustments -->
<rect x="1057" y="474" width="223" height="17" fill="#3d3d3d"/>
<rect x="1057" y="474" width="72" height="18" fill="#535353"/><rect x="1129" y="474" width="44" height="17" fill="#454545"/>
<text x="1064" y="486" class="a" textLength="59">Adjustments</text>
<text x="1137" y="486" class="t" textLength="28" style="font-weight:normal">Styles</text>
<use href="#menuic" x="1260" y="479"/>
<rect x="1057" y="491" width="223" height="103" fill="#535353"/>
<text x="1066" y="506" class="a" textLength="95" style="fill:#efefef;font-size:10.500px">Add an adjustment</text>
<g>
<circle cx="1111" cy="523" r="4.500" fill="#aaa"/><path d="M1111 515V517M1111 529V531M1103 523H1105M1117 523H1119M1105 517L1107 519M1115 527L1117 529M1117 517L1115 519M1107 527L1105 529" stroke="#bbb" stroke-width="1.300"/>
<path d="M1127 528V522L1129 524 1131 518 1133 523 1135 517 1137 522 1139 516 1141 521 1143 518 1145 528Z" fill="#aaa"/><rect x="1127" y="527" width="18" height="2" fill="#bbb"/>
<rect x="1152.500" y="517.500" width="16" height="12" fill="#555" stroke="#aaa"/><path d="M1153 529C1160 529 1160 518 1168 518" fill="none" stroke="#ddd" stroke-width="1.500"/><path d="M1158 518V529M1163 518V529M1153 523H1168" stroke="#888" stroke-width=".7"/>
<rect x="1176.500" y="517.500" width="16" height="12" fill="#bbb" stroke="#aaa"/><path d="M1177 529L1192 518V529Z" fill="#333"/>
<path d="M1200 516H1216L1208 531Z" fill="url(#grv)"/>
<rect x="1092" y="544" width="16" height="13" fill="url(#grv)" stroke="#aaa" stroke-width=".6"/><path d="M1092 550H1108M1096 544V550M1100 544V550M1104 544V550" stroke="#666" stroke-width=".8"/>
<path d="M1123 543V556M1115 556H1131M1116 547H1130" stroke="#bbb"/><path d="M1116 547L1113 554H1119ZM1130 547L1127 554H1133Z" fill="#555" stroke="#bbb" stroke-width=".8"/>
<rect x="1140" y="544" width="16" height="13" fill="url(#gr)"/><rect x="1140.500" y="544.500" width="7" height="12" fill="#333" stroke="#bbb"/>
<rect x="1163" y="544" width="12" height="10" fill="#aaa"/><circle cx="1173" cy="552" r="5" fill="#666" stroke="#ccc"/>
<circle cx="1195" cy="547" r="4.500" fill="#777"/><circle cx="1191" cy="553" r="4.500" fill="#ccc"/><circle cx="1199" cy="553" r="4.500" fill="#ccc"/>
<rect x="1212.500" y="544.500" width="15" height="12" fill="#666" stroke="#aaa"/><path d="M1212 548.500H1228M1212 552.500H1228M1217.500 544V557M1222.500 544V557" stroke="#aaa"/>
<rect x="1104" y="571" width="15" height="13" fill="url(#grv)"/><path d="M1105 583Q1108 574 1118 572 1116 580 1105 583Z" fill="#333"/>
<rect x="1128" y="571" width="15" height="13" fill="url(#gr)"/><path d="M1128 584L1143 571" stroke="#666" stroke-width="3"/>
<rect x="1152" y="571" width="16" height="13" fill="#aaa"/><path d="M1152 584V580H1157L1160 576H1165L1168 572V574L1166 579H1160L1157 583Z" fill="#444"/>
<rect x="1176" y="571" width="16" height="13" fill="#bbb"/><path d="M1176 571L1184 577 1176 584ZM1192 571L1184 577 1192 584Z" fill="#444"/>
<rect x="1200.500" y="571.500" width="15" height="12" fill="url(#gr)" stroke="#aaa"/>
</g>

<!-- Layers -->
<rect x="1057" y="597" width="223" height="16" fill="#3d3d3d"/>
<rect x="1057" y="597" width="43" height="17" fill="#535353"/><rect x="1100" y="597" width="56" height="16" fill="#454545"/><rect x="1157" y="597" width="40" height="16" fill="#454545"/>
<text x="1064" y="609" class="a" textLength="29">Layers</text>
<text x="1107" y="609" class="t" textLength="42" style="font-weight:normal">Channels</text>
<text x="1164" y="609" class="t" textLength="26" style="font-weight:normal">Paths</text>
<use href="#menuic" x="1260" y="603"/>
<rect x="1057" y="613" width="223" height="380" fill="#4c4c4c"/>
<rect x="1057" y="613" width="223" height="29" fill="#535353"/><rect x="1057" y="642" width="223" height="1" fill="#3a3a3a"/>
<rect x="1057" y="643" width="223" height="27" fill="#535353"/><rect x="1057" y="670" width="223" height="1" fill="#3a3a3a"/>
<rect x="1057" y="671" width="223" height="28" fill="#535353"/>
<rect x="1061.500" y="618.500" width="69" height="19" rx="2" fill="url(#dd)" stroke="#2f2f2f"/>
<circle cx="1074" cy="626" r="3.500" fill="none" stroke="#ddd"/><path d="M1071 629L1068 632" stroke="#ddd" stroke-width="1.500"/>
<text x="1083" y="631" class="c" textLength="20">Kind</text>
<path d="M1120 626L1123 623 1126 626ZM1120 629H1126L1123 632Z" fill="#dcdcdc"/>
<rect x="1143.500" y="622.500" width="13" height="10" fill="#666" stroke="#aaa"/><path d="M1145 632L1149 627 1151 629 1153 626 1156 632Z" fill="#ccc"/>
<circle cx="1173" cy="627" r="5" fill="url(#gr)" stroke="#bbb"/>
<text x="1191" y="632" style="font-family:'Liberation Serif',serif;font-size:14px;fill:#bbb">T</text>
<rect x="1217.500" y="623.500" width="9" height="9" fill="none" stroke="#bbb"/><rect x="1216" y="622" width="3" height="3" fill="#bbb"/><rect x="1225" y="622" width="3" height="3" fill="#bbb"/><rect x="1216" y="631" width="3" height="3" fill="#bbb"/><rect x="1225" y="631" width="3" height="3" fill="#bbb"/>
<path d="M1244 621H1251V632H1240V626H1244Z" fill="#bbb"/>
<rect x="1265" y="619" width="9" height="18" fill="#2e2e2e"/><rect x="1266" y="620" width="7" height="8" fill="#8a8a8a"/>
<rect x="1061.500" y="646.500" width="109" height="19" rx="2" fill="url(#dd)" stroke="#2f2f2f"/>
<text x="1069" y="659" class="c" textLength="31">Normal</text>
<path d="M1161 655L1164 652 1167 655ZM1161 658H1167L1164 661Z" fill="#dcdcdc"/>
<text x="1179" y="658" class="c" textLength="37">Opacity:</text>
<rect x="1221" y="646" width="36" height="19" fill="#2f2f2f"/><rect x="1256" y="646" width="19" height="19" fill="#666"/>
<text x="1226" y="659" class="c" textLength="25">100%</text><path d="M1262 655H1269L1265.500 658Z" fill="#ddd"/>
<text x="1063" y="688" class="c" textLength="23">Lock:</text>
<rect x="1096" y="679" width="11" height="11" fill="#8a8a8a"/><rect x="1098" y="681" width="3" height="3" fill="#ccc"/><rect x="1102" y="685" width="3" height="3" fill="#ccc"/><rect x="1102" y="680" width="3" height="3" fill="#ccc"/><rect x="1098" y="686" width="3" height="3" fill="#ccc"/>
<path d="M1131 677L1123 685Q1119 689 1116 690 1122 692 1125 688L1132 679Z" fill="#bbb"/>
<path d="M1145.500 678V691M1139 684.500H1152M1143 680L1145.500 677 1148 680M1143 689L1145.500 692 1148 689M1141 682L1138 684.500 1141 687M1150 682L1153 684.500 1150 687" fill="none" stroke="#bbb"/>
<rect x="1163" y="683" width="10" height="9" fill="#bbb"/><path d="M1165 683V680Q1168 676 1171 680V683" fill="none" stroke="#bbb" stroke-width="1.300"/>
<text x="1201" y="686" class="c" textLength="15">Fill:</text>
<rect x="1221" y="674" width="36" height="19" fill="#2f2f2f"/><rect x="1256" y="674" width="19" height="19" fill="#666"/>
<text x="1226" y="687" class="c" textLength="25">100%</text><path d="M1262 683H1269L1265.500 686Z" fill="#ddd"/>
<rect x="1057" y="699" width="223" height="1" fill="#333"/>
<rect x="1264" y="700" width="16" height="275" fill="#454545"/>
<rect x="1088" y="700" width="176" height="38" fill="#54627a"/>
<rect x="1057" y="738" width="207" height="1" fill="#333"/>
<rect x="1057" y="778" width="207" height="1" fill="#333"/>
<rect x="1087" y="700" width="1" height="78" fill="#333"/>
<path d="M1066 719.500Q1072 714 1078 719.500 1072 725 1066 719.500Z" fill="#999" stroke="#aaa"/><circle cx="1072" cy="719.500" r="1.800" fill="#333"/>
<path d="M1066 758.500Q1072 753 1078 758.500 1072 764 1066 758.500Z" fill="#999" stroke="#aaa"/><circle cx="1072" cy="758.500" r="1.800" fill="#333"/>
<path d="M1098 717H1102V725M1100 723L1102 726 1104 723" fill="none" stroke="#ddd"/>
<rect x="1108" y="703" width="30" height="32" fill="url(#ck2)" stroke="#000" stroke-width="1.500"/>
<path d="M1106 708V702H1112M1134 702H1140V708M1140 730V736H1134M1112 736H1106V730" fill="none" stroke="#fff"/>
<rect x="1111" y="712" width="24" height="14" fill="#5f4a4d"/><rect x="1113" y="716" width="20" height="4" fill="#b8232f"/><rect x="1112" y="722" width="22" height="3" fill="#c99a9a"/>
<text x="1149" y="724" class="c" textLength="32">Layer 1</text>
<rect x="1091.500" y="744.500" width="31" height="28" fill="#fff" stroke="#000" stroke-width="1.200"/>
<path d="M1100 745H1116L1122 756H1111V772H1100L1093 758Z" fill="#2a48a0"/>
<rect x="1110" y="759" width="13" height="14" fill="#4c4c4c"/><rect x="1112.500" y="761.500" width="9" height="9" fill="none" stroke="#bbb"/><rect x="1111" y="760" width="3" height="3" fill="#ccc"/><rect x="1120" y="760" width="3" height="3" fill="#ccc"/><rect x="1111" y="769" width="3" height="3" fill="#ccc"/><rect x="1120" y="769" width="3" height="3" fill="#ccc"/>
<text x="1133" y="763" class="c" textLength="43">Polygon 1</text><rect x="1131" y="763" width="49" height="1" fill="#e0e0e0"/>
<rect x="1057" y="975" width="223" height="18" fill="#535353"/>
<rect x="1057" y="974" width="223" height="1" fill="#333"/>
<path d="M1081 985.500H1085M1080 982H1078Q1074 985.500 1078 989H1081M1086 982H1088Q1092 985.500 1088 989H1086" fill="none" stroke="#8a8a8a" stroke-width="1.300"/>
<text x="1105" y="990" style="font-family:'Liberation Serif',serif;font-style:italic;font-size:14px;fill:#b4b4b4">fx</text><path d="M1119 989H1122L1120.500 991Z" fill="#ccc"/>
<rect x="1131" y="980" width="13" height="11" fill="#bbb"/><circle cx="1137.500" cy="985.500" r="3" fill="#444"/>
<circle cx="1164" cy="985" r="5" fill="url(#gr)" stroke="#bbb"/><path d="M1172 989H1175L1173.500 991Z" fill="#ccc"/>
<path d="M1185 980H1190L1192 982H1197V991H1185Z" fill="#b4b4b4"/>
<path d="M1213 980H1222V991H1216L1213 987Z" fill="#b9b9b9"/>
<path d="M1239 982H1251M1243 980H1247M1241 983V991H1249V983M1243.500 984V990M1246.500 984V990" fill="none" stroke="#a0a0a0"/>

<!-- blue floating sidebar -->
<path d="M1280 368H1278Q1275 368 1275 372V552Q1275 556 1278 556H1280Z" fill="#065a8c" stroke="#111"/>
<rect x="1277" y="459" width="3" height="2" fill="#fff"/><rect x="1277" y="463" width="3" height="2" fill="#fff"/><rect x="1277" y="467" width="3" height="2" fill="#fff"/>

<!-- Taskbar -->
<rect y="993" width="1280" height="31" fill="#000"/>
<rect x="907" y="993" width="373" height="22" fill="#252525"/>
<rect x="333" y="993" width="35" height="31" fill="#2a2a2a"/>
<g fill="#fff"><path d="M10 1003.200L17 1002.200V1008H10ZM18 1002L26 1001V1008H18ZM10 1009H17V1014.800L10 1013.800ZM18 1009H26V1016L18 1015Z"/></g>
<circle cx="54" cy="1009" r="6.500" fill="none" stroke="#fff" stroke-width="2"/>
<rect x="84.500" y="1003.500" width="11" height="12" fill="none" stroke="#fff"/><path d="M83 1005H81V1014H83M97 1005H99V1014H97" fill="none" stroke="#fff"/>
<path d="M121 1003H128L130 1005H137V1016H121Z" fill="#f3c65c"/><path d="M121 1008H137V1016H121Z" fill="#f9dd88"/><rect x="126" y="1010" width="6" height="6" fill="#2a8fd4"/>
<path d="M159 1005H173V1016H159Z" fill="#fff"/><path d="M163 1005Q163 1000 166 1000 169 1000 169 1005" fill="none" stroke="#fff"/><rect x="162" y="1008" width="3" height="3" fill="#000"/><rect x="167" y="1008" width="3" height="3" fill="#000"/><rect x="162" y="1012" width="3" height="3" fill="#000"/><rect x="167" y="1012" width="3" height="3" fill="#000"/>
<rect x="196" y="1002" width="14" height="14" fill="#fff"/><rect x="196" y="1013" width="14" height="3" fill="#c01818"/><text x="197" y="1012" style="font-size:7px;font-weight:bold;fill:#111">VNC</text>
<circle cx="240" cy="1009" r="7" fill="#e0402f"/><path d="M240 1009L246 1005A7 7 0 0 1 243 1015.400Z" fill="#f7c42c"/><path d="M240 1009L243 1015.400A7 7 0 0 1 233.800 1006Z" fill="#2aa24e"/><circle cx="240" cy="1009" r="3.500" fill="#3f84ee" stroke="#fff"/>
<path d="M270 1005L277 1001 284 1005 277 1009Z" fill="#8cc63e"/><path d="M270 1007L277 1011 284 1007V1009L277 1013 270 1009Z" fill="#e9b928"/><path d="M270 1010L277 1014 284 1010V1012L277 1016 270 1012Z" fill="#d9534f"/>
<rect x="306" y="1001" width="7" height="6" fill="#a04c9a"/><rect x="315" y="1001" width="7" height="6" fill="#4ea0d8"/><rect x="310" y="1008" width="8" height="6" fill="#7777cc"/><rect x="306" y="1014" width="5" height="3" fill="#ddd"/><rect x="316" y="1014" width="5" height="3" fill="#ddd"/>
<rect x="343.500" y="1001.500" width="15" height="15" fill="#0b1e4c" stroke="#7ba7da"/><text x="346" y="1013" style="font-size:9.500px;font-weight:bold;fill:#88b4e8">Ps</text>
<ellipse cx="386" cy="1010" rx="6.500" ry="5.500" fill="#d9dee6"/><circle cx="383" cy="1009" r="1" fill="#d33"/><circle cx="386" cy="1007" r="1" fill="#2a7fd4"/><circle cx="389" cy="1009" r="1" fill="#3a3"/><path d="M391 1012L394 1002" stroke="#e08a2a" stroke-width="2"/>
<g fill="#76d8f0"><rect x="115" y="1022" width="28" height="2"/><rect x="226" y="1022" width="28" height="2"/><rect x="263" y="1022" width="28" height="2"/><rect x="300" y="1022" width="28" height="2"/><rect x="333" y="1022" width="35" height="2"/><rect x="374" y="1022" width="28" height="2"/></g>
<text x="911" y="1013" textLength="35" style="font-size:12px;font-weight:bold;fill:#0e0e0e">Online</text><path d="M950 1007H958L954 1012Z" fill="#111"/>
<g clip-path="url(#msg)"><text x="968" y="1013" style="font-size:12px;fill:#111">&lt;Enter Personal Message&gt;</text></g>
<path d="M1076 1013L1082 1007 1088 1013" fill="none" stroke="#fff" stroke-width="1.300"/>
<circle cx="1106" cy="1009" r="7.500" fill="#d9232e"/><text x="1101" y="1013.500" style="font-size:11px;font-weight:bold;fill:#fff">M</text>
<rect x="1122.500" y="1005.500" width="18" height="10" fill="none" stroke="#fff"/><rect x="1122" y="1001" width="5" height="5" fill="#000" stroke="#fff"/><path d="M1131 1016V1018M1126 1018.500H1136" stroke="#fff"/>
<path d="M1147 1006H1150L1154 1003V1015L1150 1012H1147Z" fill="none" stroke="#fff"/><path d="M1157 1005Q1160 1009 1157 1013M1160 1003Q1164 1009 1160 1015" fill="none" stroke="#fff"/>
<text x="1172" y="1013" textLength="49" style="font-size:12px;fill:#f4f4f4">10:52 AM</text>
<path d="M1239 1001H1255V1013H1249L1247 1016 1245 1013H1239Z" fill="#fff"/><path d="M1242 1005H1252M1242 1008H1252" stroke="#000"/>
<circle cx="1262" cy="1012" r="4" fill="#2b5e2b"/>
</svg>
</body></html>
